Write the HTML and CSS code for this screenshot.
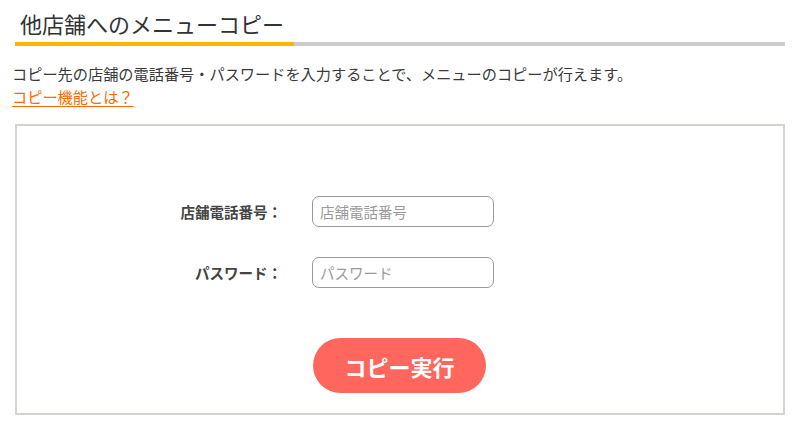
FILE: index.html
```html
<!DOCTYPE html>
<html lang="ja">
<head>
<meta charset="utf-8">
<link rel="stylesheet" href="styles.css">
</head>
<body>
<div class="page">
  <h1 class="title">他店舗へのメニューコピー</h1>
  <div class="title-bar"><span class="bar-accent"></span><span class="bar-rest"></span></div>
  <p class="desc">コピー先の店舗の電話番号・パスワードを入力することで、メニューのコピーが行えます。</p>
  <a class="help-link" href="#">コピー機能とは？</a>
  <div class="box">
    <div class="form-grid">
      <label class="label" for="tel">店舗電話番号：</label>
      <input class="field" id="tel" type="text" placeholder="店舗電話番号">
      <label class="label" for="pw">パスワード：</label>
      <input class="field" id="pw" type="password" placeholder="パスワード">
    </div>
    <div class="actions">
      <button class="btn" type="button">コピー実行</button>
    </div>
  </div>
</div>
</body>
</html>
```
FILE: styles.css
```css
* { box-sizing: border-box; }
body {
  margin: 0;
  background: #fff;
  font-family: "Noto Sans CJK JP", "Noto Sans", sans-serif;
  color: #333;
}
.page {
  padding: 0 13px 0 12px;
}
.title {
  margin: 0;
  padding: 8px 0 0 8px;
  font-size: 22px;
  font-weight: 400;
  line-height: 30px;
  height: 42px;
  color: #333;
}
.title-bar {
  display: flex;
  height: 4px;
  margin-left: 3px;
}
.bar-accent { width: 279px; background: #ffb400; }
.bar-rest { flex: 1; background: #cccccc; }
.desc {
  margin: 16px 0 0 0;
  font-size: 15.2px;
  line-height: 22px;
  color: #3a3a3a;
}
.help-link {
  display: inline-block;
  font-size: 15.2px;
  line-height: 22px;
  color: #ff6a00;
  text-decoration: underline;
  text-underline-offset: 3px;
}
.box {
  margin: 16px 0 0 3px;
  border: 2px solid #d3d3cf;
  height: 291px;
  padding: 70px 0 0 0;
}
.form-grid {
  display: grid;
  grid-template-columns: 160px 182px;
  column-gap: 30px;
  row-gap: 30px;
  margin-left: 105px;
  align-items: center;
}
.label {
  text-align: right;
  font-size: 14.5px;
  font-weight: 700;
  color: #444;
  padding-right: 0;
}
.field {
  height: 31px;
  width: 182px;
  border: 1px solid #9a9a9a;
  border-radius: 7px;
  padding: 0 7px;
  font-family: inherit;
  font-size: 14.5px;
  color: #333;
  outline: none;
}
.field::placeholder { color: #9a9a9a; }
.actions {
  margin: 50px 0 0 296px;
}
.btn {
  width: 173px;
  height: 55px;
  border: none;
  border-radius: 28px;
  background: #ff675e;
  color: #fff;
  font-family: inherit;
  font-size: 22px;
  font-weight: 700;
  cursor: pointer;
}
```
